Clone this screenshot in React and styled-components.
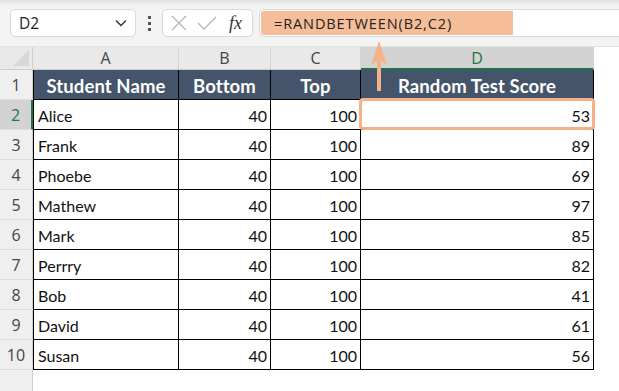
import React from "react";
import styled, { createGlobalStyle, css } from "styled-components";

const GlobalStyle = createGlobalStyle`
  html, body {
    margin: 0;
    padding: 0;
    background: #ffffff;
  }
  body {
    font-family: "Open Sans", "Liberation Sans", sans-serif;
  }
`;

const ORANGE = "#f4b286";
const HEADER_BG = "#44546a";
const GREEN = "#217346";

const Page = styled.div`
  position: relative;
  width: 619px;
  height: 391px;
  overflow: hidden;
  background: #ffffff;
`;

const Toolbar = styled.div`
  height: 47px;
  box-sizing: border-box;
  display: flex;
  align-items: center;
  padding: 0 0 0 10px;
  background: linear-gradient(#e2e2e2 0px, #f1f1f1 5px, #f3f3f3 8px);
  border-bottom: 1px solid #e3e3e3;
`;

const NameBox = styled.div`
  width: 126px;
  height: 28px;
  box-sizing: border-box;
  display: flex;
  align-items: center;
  justify-content: space-between;
  padding: 0 8px 0 8px;
  background: #fff;
  border: 1px solid #dadada;
  border-radius: 5px;
  font-size: 15.5px;
  color: #222;
`;

const Dots = styled.div`
  width: 26px;
  display: flex;
  flex-direction: column;
  align-items: center;
  gap: 3px;
  & span {
    width: 3px;
    height: 3px;
    background: #555;
  }
`;

const FxBox = styled.div`
  width: 91px;
  height: 28px;
  box-sizing: border-box;
  display: flex;
  align-items: center;
  gap: 10px;
  padding: 0 0 0 8px;
  background: #fff;
  border: 1px solid #dadada;
  border-radius: 5px;
`;

const Fx = styled.span`
  font-family: "Liberation Serif", serif;
  font-style: italic;
  font-size: 18px;
  color: #333;
  margin-left: 2px;
`;

const FormulaBar = styled.div`
  flex: 1;
  margin-left: 6px;
  height: 28px;
  box-sizing: border-box;
  display: flex;
  align-items: center;
  background: #fff;
  border: 1px solid #dadada;
  border-right: none;
  border-radius: 5px 0 0 5px;
  padding: 1px 0 1px 1px;
`;

const Formula = styled.div`
  width: 252px;
  height: 100%;
  display: flex;
  align-items: center;
  padding-left: 13px;
  box-sizing: border-box;
  background: #f5bd98;
  border-radius: 3px 0 0 3px;
  font-size: 14.5px;
  letter-spacing: 0.9px;
  color: #222;
`;

const Sheet = styled.div`
  display: grid;
  grid-template-columns: 33px 146px 92px 90px 233px 1fr;
  grid-auto-rows: 30px;
  grid-template-rows: 23px;
  font-family: Lato, "Liberation Sans", sans-serif;
`;

const Corner = styled.div`
  background: #e9e9e9;
  border-right: 1px solid #cfcfcf;
  border-bottom: 1px solid #cfcfcf;
  position: relative;
  &::after {
    content: "";
    position: absolute;
    right: 3px;
    bottom: 3px;
    border-left: 16px solid transparent;
    border-bottom: 16px solid #d8d8d8;
  }
`;

const ColHead = styled.div`
  background: #e9e9e9;
  border-right: 1px solid #d4d4d4;
  border-bottom: 1px solid #cfcfcf;
  display: flex;
  align-items: center;
  justify-content: center;
  font-family: "Open Sans", sans-serif;
  font-size: 16px;
  color: #444;
  ${(p) =>
    p.$active &&
    css`
      background: #d3d3d3;
      color: ${GREEN};
      border-bottom: 2px solid ${GREEN};
    `}
`;

const RowHead = styled.div`
  background: #efefef;
  border-right: 1px solid #cfcfcf;
  border-bottom: 1px solid #dddddd;
  display: flex;
  align-items: flex-end;
  justify-content: center;
  padding-bottom: 3px;
  box-sizing: border-box;
  font-family: "Open Sans", sans-serif;
  font-size: 16px;
  color: #444;
  ${(p) =>
    p.$active &&
    css`
      background: #d3d3d3;
      color: ${GREEN};
      border-right: 2px solid ${GREEN};
    `}
`;

const HeadCell = styled.div`
  background: ${HEADER_BG};
  color: #fff;
  font-weight: 700;
  font-size: 18.5px;
  letter-spacing: 0.1px;
  display: flex;
  align-items: center;
  justify-content: center;
  padding-top: 2px;
  box-sizing: border-box;
  border-right: 1px solid #000;
  border-bottom: 1px solid #000;
  ${(p) => p.$first && css`border-left: 1px solid #000;`}
`;

const Cell = styled.div`
  position: relative;
  background: #fff;
  display: flex;
  align-items: center;
  justify-content: ${(p) => (p.$num ? "flex-end" : "flex-start")};
  padding: 2px 3px 0 4px;
  box-sizing: border-box;
  font-size: 16px;
  color: #111;
  border-right: 1px solid #000;
  border-bottom: 1px solid #000;
  ${(p) => p.$first && css`border-left: 1px solid #000;`}
`;

const Blank = styled.div`
  background: #fff;
`;

const Highlight = styled.div`
  position: absolute;
  left: -2px;
  right: -2px;
  top: -2px;
  bottom: -1px;
  border: 3px solid ${ORANGE};
  border-radius: 4px;
  pointer-events: none;
`;

const Arrow = styled.svg`
  position: absolute;
  left: 370px;
  top: 40px;
`;

const rows = [
  ["Alice", 53],
  ["Frank", 89],
  ["Phoebe", 69],
  ["Mathew", 97],
  ["Mark", 85],
  ["Perrry", 82],
  ["Bob", 41],
  ["David", 61],
  ["Susan", 56],
];

const Chevron = () => (
  <svg width="12" height="8" viewBox="0 0 12 8">
    <path d="M1 1.5 L6 6.5 L11 1.5" fill="none" stroke="#333" strokeWidth="1.4" />
  </svg>
);

const Cross = () => (
  <svg width="16" height="16" viewBox="0 0 16 16">
    <path d="M1 1 L15 15 M15 1 L1 15" stroke="#b5b5b5" strokeWidth="1.3" fill="none" />
  </svg>
);

const Check = () => (
  <svg width="20" height="16" viewBox="0 0 20 16">
    <path d="M1 8 L7 14 L19 2" stroke="#b5b5b5" strokeWidth="1.3" fill="none" />
  </svg>
);

export default function App() {
  return (
    <>
      <GlobalStyle />
      <Page>
        <Toolbar>
          <NameBox>
            D2
            <Chevron />
          </NameBox>
          <Dots>
            <span />
            <span />
            <span />
          </Dots>
          <FxBox>
            <Cross />
            <Check />
            <Fx>fx</Fx>
          </FxBox>
          <FormulaBar>
            <Formula>=RANDBETWEEN(B2,C2)</Formula>
          </FormulaBar>
        </Toolbar>
        <Sheet>
          <Corner />
          <ColHead>A</ColHead>
          <ColHead>B</ColHead>
          <ColHead>C</ColHead>
          <ColHead $active>D</ColHead>
          <Blank />

          <RowHead>1</RowHead>
          <HeadCell $first>Student Name</HeadCell>
          <HeadCell>Bottom</HeadCell>
          <HeadCell>Top</HeadCell>
          <HeadCell>Random Test Score</HeadCell>
          <Blank />

          {rows.map(([name, score], i) => (
            <React.Fragment key={name}>
              <RowHead $active={i === 0}>{i + 2}</RowHead>
              <Cell $first>{name}</Cell>
              <Cell $num>40</Cell>
              <Cell $num>100</Cell>
              <Cell $num>
                {score}
                {i === 0 && <Highlight />}
              </Cell>
              <Blank />
            </React.Fragment>
          ))}
          <RowHead />
          <Blank />
        </Sheet>
        <Arrow width="18" height="52" viewBox="0 0 18 52">
          <path d="M9 1 L17 25 L11 21 L11 51 L7 51 L7 21 L1 25 Z" fill={ORANGE} />
        </Arrow>
      </Page>
    </>
  );
}
